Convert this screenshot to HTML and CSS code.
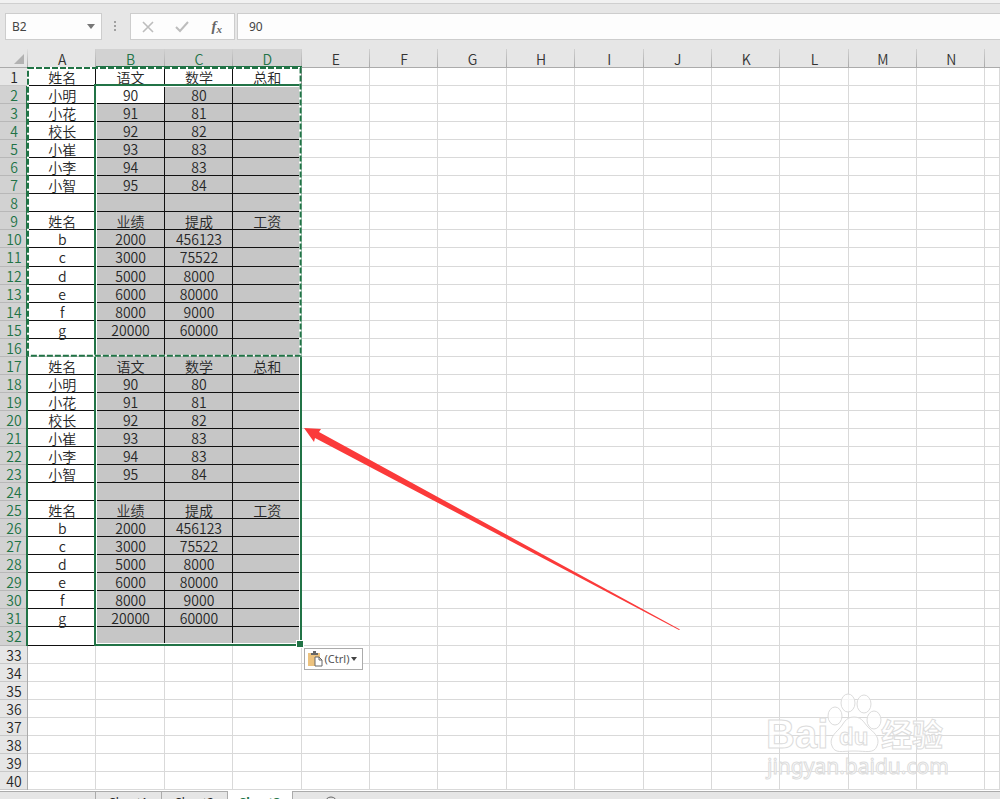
FILE: index.html
```html
<!DOCTYPE html>
<html lang="zh-CN">
<head>
  <meta charset="UTF-8">
  <meta name="viewport" content="width=device-width, initial-scale=1.0">
  <title>Sheet3</title>
  <link rel="stylesheet" href="styles.css">
</head>
<body>
  <div class="app">
    <div class="ribbon_edge"></div>
    <div class="formula_bar">
      <div class="name_box">
        <input type="text" value="B2" aria-label="名称框">
        <button type="button" aria-label="名称列表">
          <svg width="8" height="5" viewBox="0 0 8 5"><path d="M0 0h8L4 5z" fill="#777"/></svg>
        </button>
      </div>
      <svg class="dots" width="3" height="12" viewBox="0 0 3 12" fill="#a0a0a0">
        <rect width="2" height="2"/><rect y="4" width="2" height="2"/><rect y="8" width="2" height="2"/>
      </svg>
      <div class="tools">
        <button type="button" aria-label="取消">
          <svg width="12" height="12" viewBox="0 0 12 12"><path d="M1 1l10 10M11 1L1 11" stroke="#bdbdbd" stroke-width="1.6"/></svg>
        </button>
        <button type="button" aria-label="输入">
          <svg width="14" height="12" viewBox="0 0 14 12"><path d="M1 6l4 4 8-9" fill="none" stroke="#bdbdbd" stroke-width="2"/></svg>
        </button>
        <button type="button" class="fx" aria-label="插入函数"><i>f</i><i class="fx_x">x</i></button>
      </div>
      <input type="text" class="formula" value="90" aria-label="编辑栏">
    </div>

    <div class="sheet">
      <table class="grid">
        <thead><tr id="letters"></tr></thead>
        <tbody id="rows"></tbody>
      </table>

      <svg class="arrow" width="380" height="206" viewBox="0 0 380 206">
        <path d="M1 1L18 2L16 5L377 202.500L376 203L12 11L11 15z" fill="#fb3a3a"/>
      </svg>

      <svg class="watermark" width="184" height="90" viewBox="0 0 184 90">
        <g fill="#fff" fill-opacity=".7" stroke="#dcdcdc">
          <text x="2" y="56" class="mark_big">Bai</text>
          <ellipse cx="71" cy="24" rx="7" ry="9"/>
          <ellipse cx="84" cy="11" rx="7" ry="9"/>
          <ellipse cx="100" cy="12" rx="7" ry="9"/>
          <ellipse cx="110" cy="28" rx="7" ry="9"/>
          <path d="M90 25c9 0 10 7 16 12s10 10 7 17c-3 8-11 5-23 5s-19 3-22-5c-3-7 2-12 7-17s6-12 15-12z"/>
          <text x="75" y="53" class="mark_du">du</text>
          <text x="117" y="54" class="mark_cjk">经验</text>
          <text x="3" y="82" class="mark_url">jingyan.baidu.com</text>
        </g>
      </svg>
    </div>

    <div class="tabs">
      <button type="button">Sheet1</button>
      <button type="button">Sheet2</button>
      <button type="button" class="active">Sheet3</button>
      <div class="tabs_rest">
        <svg width="14" height="14" viewBox="0 0 14 14" fill="none" stroke="#666">
          <circle cx="7" cy="7" r="6"/><path d="M7 4v6M4 7h6"/>
        </svg>
      </div>
    </div>
  </div>

  <template id="selection">
    <div class="selection">
      <span class="handle"></span>
      <button type="button" class="paste">
        <svg width="15" height="16" viewBox="0 0 15 16">
          <path d="M0 2h12v13H0z" fill="#ecc27e"/>
          <path d="M3 4V2h2V0h3v2h2v2z" fill="#666"/>
          <path d="M7 6h4l3 3v6H7z" fill="#fff" stroke="#666"/>
          <path d="M11 6v3h3" fill="none" stroke="#666"/>
        </svg>
        <span>(Ctrl)</span>
        <svg width="6" height="4" viewBox="0 0 6 4"><path d="M0 0h6L3 4z" fill="#444"/></svg>
      </button>
    </div>
  </template>
  <template id="ants">
    <svg class="ants">
      <rect width="100%" height="100%" stroke="#fff"/>
      <rect width="100%" height="100%" stroke="#217346" stroke-dasharray="6 2"/>
    </svg>
  </template>
  <script src="script.js"></script>
</body>
</html>
```
FILE: styles.css
```css
* {
  box-sizing: border-box;
}
body {
  margin: 0;
  font-family: "Noto Sans CJK SC", sans-serif;
  font-size: 14px;
  color: #262626;
}
button, input {
  margin: 0;
  padding: 0;
  border: 0;
  background: none;
  color: inherit;
  font: inherit;
}
.app {
  display: flex;
  flex-direction: column;
  height: 100vh;
  overflow: hidden;
  background: #e6e6e6;
}
.ribbon_edge {
  flex: none;
  height: 4px;
  background: #f1f1f1;
  border-bottom: 1px solid #cfcfcf;
}

/* formula bar */
.formula_bar {
  flex: none;
  display: flex;
  align-items: center;
  padding: 9px 0 9px 5px;
  font-family: "Noto Sans", sans-serif;
  font-size: 12px;
  color: #444;
}
.name_box, .tools, .formula {
  height: 27px;
  background: #fdfdfd;
  border: 1px solid #cdcdcd;
}
.name_box {
  display: flex;
  width: 97px;
}
.name_box input {
  flex: 1;
  min-width: 0;
  padding-left: 6px;
}
.name_box button {
  display: flex;
  align-items: center;
  justify-content: center;
  width: 20px;
}
.dots {
  margin: 0 13px 0 12px;
}
.tools {
  display: flex;
  align-items: center;
  width: 105px;
}
.tools button {
  display: flex;
  align-items: center;
  justify-content: center;
  flex: 1;
  height: 100%;
}
.fx {
  font-family: "Liberation Serif", serif;
  font-size: 15px;
  font-weight: bold;
  color: #666;
}
.fx .fx_x {
  padding-top: 4px;
  font-size: 11px;
}
.formula {
  flex: 1;
  min-width: 0;
  margin-left: 2px;
  padding-left: 11px;
  border-right: 0;
}

/* cells */
.sheet {
  position: relative;
  flex: 1;
  min-height: 0;
  padding-bottom: 1px;
  background: #fff;
}
.grid {
  width: 100%;
  height: 100%;
  table-layout: fixed;
  border-spacing: 0;
}
.grid th, .grid td {
  padding: 0;
  height: 18px;
  line-height: 16px;
  font-weight: 350;
  text-align: center;
  white-space: nowrap;
}
.grid td {
  position: relative;
  box-shadow: inset -1px -1px #d9d9d9;
}
.grid .letter {
  width: 6.84%;
  height: 19px;
  padding-top: 1px;
  color: #333;
  background: linear-gradient(#d0d0d0, #a8a8a8) right / 1px 100% no-repeat #e6e6e6;
  box-shadow: inset 0 -1px #ababab;
}
.grid .letter.last {
  width: auto;
  background-image: none;
}
.grid .corner {
  width: 28px;
  height: 19px;
  box-shadow: inset 0 -1px #ababab;
  background: linear-gradient(#e0e0e0, #a8a8a8) right / 1px 100% no-repeat #e6e6e6;
}
.corner svg {
  display: block;
  margin: 1px 4px 0 auto;
}
.grid .number {
  background: #e6e6e6;
  box-shadow: inset -1px 0 #ababab, inset 0 -1px #c8c8c8;
}
.grid .letter.on {
  color: #217346;
  background-color: #d2d2d2;
  box-shadow: inset 0 -2px #217346;
}
.grid .number.on {
  color: #217346;
  background: #d2d2d2;
  box-shadow: inset -2px 0 #217346, inset 0 -1px #b8b8b8;
}
.grid .filled {
  box-shadow: inset -1px -1px #111;
}
.grid .picked {
  background: #c6c6c6;
}

/* overlays */
.selection {
  position: absolute;
  z-index: 1;
  top: -2px;
  left: -2px;
  width: calc(300% + 2px);
  height: calc(3100% + 2px);
  border: 2px solid #217346;
  box-shadow: inset 0 0 0 1px #fff;
}
.handle {
  position: absolute;
  right: -3px;
  bottom: -3px;
  width: 6px;
  height: 6px;
  background: #217346;
  outline: 1px solid #fff;
}
.paste {
  position: absolute;
  top: 100%;
  left: 100%;
  display: flex;
  align-items: center;
  gap: 2px;
  width: 59px;
  height: 22px;
  margin: 4px 0 0 4px;
  padding-left: 3px;
  background: #fff;
  border: 1px solid #ababab;
  font-family: "Noto Sans", sans-serif;
  font-size: 11px;
  font-weight: 400;
  color: #555;
}
.paste svg {
  flex: none;
}
.ants {
  position: absolute;
  z-index: 2;
  top: 0;
  left: 0;
  width: calc(400% - 1px);
  height: calc(1600% - 1px);
  overflow: visible;
  pointer-events: none;
}
.ants rect {
  fill: none;
  stroke-width: 2;
}
.arrow {
  position: absolute;
  z-index: 3;
  top: 378px;
  left: 303px;
}
.watermark {
  position: absolute;
  right: 52px;
  bottom: 9px;
}
.watermark text {
  font-family: "Liberation Sans", sans-serif;
  font-weight: bold;
}
.watermark .mark_big {
  font-size: 40px;
}
.watermark .mark_du {
  font-size: 24px;
}
.watermark .mark_cjk {
  font-family: "Noto Sans CJK SC", sans-serif;
  font-size: 31px;
}
.watermark .mark_url {
  font-family: "Noto Sans", sans-serif;
  font-size: 21px;
  font-weight: 400;
}

/* sheet tabs */
.tabs {
  flex: none;
  display: flex;
  align-items: flex-start;
  height: 8px;
  padding-left: 95px;
  overflow: hidden;
  background: linear-gradient(#ababab, #ababab) top / 100% 1px no-repeat #e6e6e6;
  font-family: "Noto Sans", sans-serif;
  font-size: 12px;
}
.tabs button {
  width: 66px;
  height: 22px;
  border-left: 1px solid #ababab;
}
.tabs .active {
  background: #fff;
  border-right: 1px solid #ababab;
  font-weight: bold;
  color: #217346;
}
.tabs_rest {
  padding: 5px 0 0 31px;
}
```
FILE: script.js
```js
const LETTERS = 'ABCDEFGHIJKLMN'.split('');
const ROW_COUNT = 40;
const LAST_FILLED = 32;

// one 16-row block, pasted twice
const block = [
  ['姓名', '语文', '数学', '总和'],
  ['小明', 90, 80],
  ['小花', 91, 81],
  ['校长', 92, 82],
  ['小崔', 93, 83],
  ['小李', 94, 83],
  ['小智', 95, 84],
  [],
  ['姓名', '业绩', '提成', '工资'],
  ['b', 2000, 456123],
  ['c', 3000, 75522],
  ['d', 5000, 8000],
  ['e', 6000, 80000],
  ['f', 8000, 9000],
  ['g', 20000, 60000],
  []
];
const data = block.concat(block);

const addCell = (row, tag, className, text = '') => {
  const cell = document.createElement(tag);
  cell.className = className;
  cell.textContent = text;
  row.appendChild(cell);
  return cell;
};

const overlay = (id) => document.getElementById(id).content.cloneNode(true);

const letters = document.getElementById('letters');
addCell(letters, 'th', 'corner').innerHTML =
  '<svg width="10" height="10" viewBox="0 0 10 10"><path d="M10 0v10H0z" fill="#b2b2b2"/></svg>';
LETTERS.forEach((letter, i) => {
  addCell(letters, 'th', i > 0 && i < 4 ? 'letter on' : 'letter', letter);
});
addCell(letters, 'th', 'letter last');

const rows = document.getElementById('rows');
for (let r = 1; r <= ROW_COUNT; r++) {
  const row = document.createElement('tr');
  addCell(row, 'th', r > 1 && r <= LAST_FILLED ? 'number on' : 'number', r);

  for (let c = 0; c <= LETTERS.length; c++) {
    const filled = r <= LAST_FILLED && c < 4;
    let className = filled ? 'filled' : '';
    // B2 stays white as the active cell
    if (filled && r > 1 && c > 0 && !(r === 2 && c === 1)) className += ' picked';

    const cell = addCell(row, 'td', className, filled ? data[r - 1][c] : '');
    if (r === 1 && c === 0) cell.appendChild(overlay('ants'));
    if (r === 2 && c === 1) cell.appendChild(overlay('selection'));
  }
  rows.appendChild(row);
}
```
